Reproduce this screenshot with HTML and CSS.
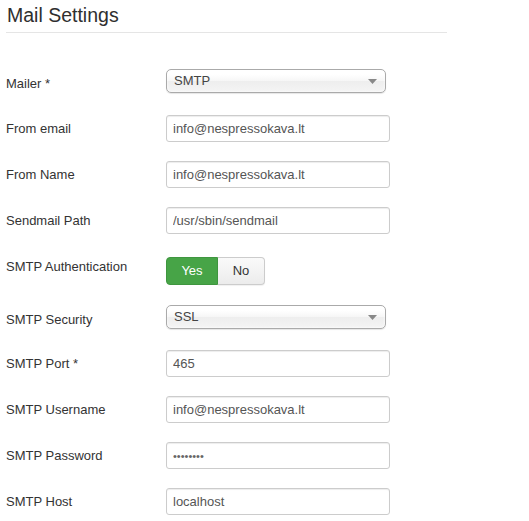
FILE: index.html
```html
<!DOCTYPE html>
<html lang="en">
<head>
<meta charset="utf-8">
<title>Mail Settings</title>
<link rel="stylesheet" href="styles.css">
</head>
<body>
<div class="panel">
  <h2 class="panel-title">Mail Settings</h2>
  <form class="settings-form">
    <div class="control-group cg-select">
      <label class="control-label">Mailer *</label>
      <div class="chzn-single"><span>SMTP</span><svg class="chzn-arrow" width="9" height="5" viewBox="0 0 9 5"><path d="M0 0h9L4.5 5z" fill="#888"/></svg></div>
    </div>
    <div class="control-group">
      <label class="control-label">From email</label>
      <input class="text-input" type="text" value="info@nespressokava.lt">
    </div>
    <div class="control-group">
      <label class="control-label">From Name</label>
      <input class="text-input" type="text" value="info@nespressokava.lt">
    </div>
    <div class="control-group">
      <label class="control-label">Sendmail Path</label>
      <input class="text-input" type="text" value="/usr/sbin/sendmail">
    </div>
    <div class="control-group cg-toggle">
      <label class="control-label">SMTP Authentication</label>
      <div class="btn-group">
        <span class="btn btn-yes">Yes</span><span class="btn btn-no">No</span>
      </div>
    </div>
    <div class="control-group cg-select cg-short">
      <label class="control-label">SMTP Security</label>
      <div class="chzn-single"><span>SSL</span><svg class="chzn-arrow" width="9" height="5" viewBox="0 0 9 5"><path d="M0 0h9L4.5 5z" fill="#888"/></svg></div>
    </div>
    <div class="control-group">
      <label class="control-label">SMTP Port *</label>
      <input class="text-input" type="text" value="465">
    </div>
    <div class="control-group">
      <label class="control-label">SMTP Username</label>
      <input class="text-input" type="text" value="info@nespressokava.lt">
    </div>
    <div class="control-group">
      <label class="control-label">SMTP Password</label>
      <input class="text-input pw-input" type="password" value="password">
    </div>
    <div class="control-group">
      <label class="control-label">SMTP Host</label>
      <input class="text-input" type="text" value="localhost">
    </div>
  </form>
</div>
</body>
</html>
```
FILE: styles.css
```css
html, body {
  margin: 0;
  padding: 0;
  background: #fff;
}

body {
  font-family: "Liberation Sans", Arial, sans-serif;
  font-size: 13px;
  color: #333;
}

.panel {
  padding: 0 6px;
}

.panel-title {
  width: 441px;
  margin: 0;
  padding: 3px 0 5px 1px;
  box-sizing: border-box;
  font-size: 19.5px;
  font-weight: normal;
  line-height: 24px;
  color: #2f2f2f;
  border-bottom: 1px solid #e5e5e5;
}

.settings-form {
  margin-top: 36px;
}

.control-group {
  display: flex;
  align-items: flex-start;
  height: 46px;
}

.cg-short {
  height: 45px;
}

.cg-toggle {
  margin-top: 4px;
  height: 48px;
}

.control-label {
  width: 160px;
  flex: none;
  padding-top: 5px;
  line-height: 18px;
  color: #333;
}

.cg-select .control-label {
  padding-top: 6px;
}

.cg-toggle .control-label {
  padding-top: 1px;
}

.text-input {
  width: 224px;
  height: 27px;
  box-sizing: border-box;
  margin: 0;
  padding: 4px 6px;
  font-family: "Liberation Sans", Arial, sans-serif;
  font-size: 13px;
  line-height: 18px;
  color: #555;
  background: #fff;
  border: 1px solid #ccc;
  border-radius: 3px;
  box-shadow: inset 0 1px 1px rgba(0, 0, 0, 0.075);
  outline: none;
}

.pw-input {
  font-size: 11px;
  color: #666;
}

.chzn-single {
  width: 220px;
  height: 24px;
  box-sizing: border-box;
  display: flex;
  align-items: center;
  justify-content: space-between;
  padding: 0 8px 0 7px;
  color: #444;
  line-height: 22px;
  background: linear-gradient(#fff 20%, #f6f6f6 50%, #eee 52%, #f4f4f4 100%);
  border: 1px solid #aaa;
  border-radius: 5px;
  box-shadow: inset 0 0 3px #fff, 0 1px 1px rgba(0, 0, 0, 0.1);
}

.chzn-arrow {
  display: block;
  margin-top: 1px;
}

.btn-group {
  display: flex;
  height: 28px;
}

.btn {
  display: flex;
  align-items: center;
  justify-content: center;
  box-sizing: border-box;
  height: 28px;
  font-size: 13px;
  line-height: 18px;
}

.btn-yes {
  width: 52px;
  color: #fff;
  background: #47a447;
  border: 1px solid #3f963f;
  border-radius: 4px 0 0 4px;
}

.btn-no {
  width: 47px;
  color: #333;
  background: linear-gradient(#fafafa, #ececec);
  border: 1px solid #ccc;
  border-left: none;
  border-radius: 0 4px 4px 0;
  box-shadow: 0 1px 1px rgba(0, 0, 0, 0.06);
}
```
